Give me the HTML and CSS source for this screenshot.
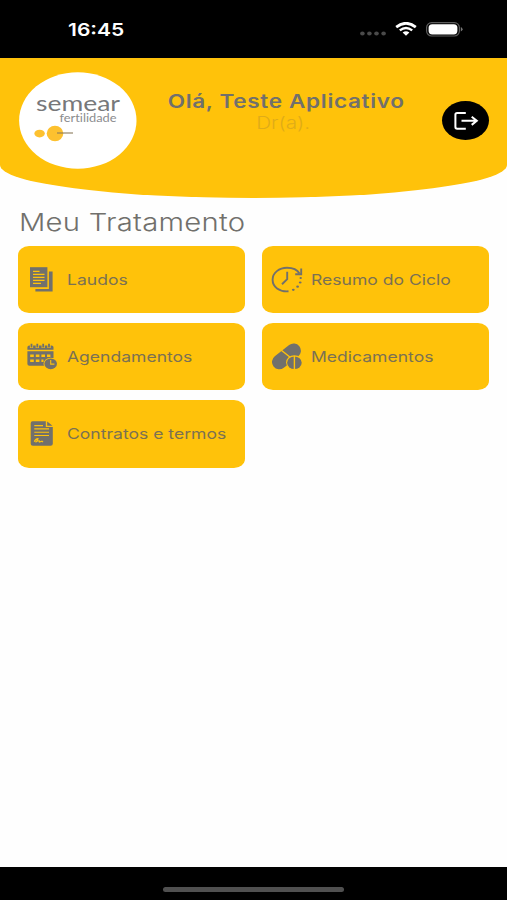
FILE: index.html
```html
<!DOCTYPE html>
<html lang="pt-BR">
<head>
    <meta charset="UTF-8">
    <meta name="viewport" content="width=device-width, initial-scale=1.0">
    <title>Semear Fertilidade</title>
    <link rel="stylesheet" href="styles.css">
</head>
<body>
    <div class="status-bar">
        <span class="time">16:45</span>
        <div class="status-icons">
            <svg class="signal" width="27" height="5" viewBox="0 0 27 5" fill="#4a4a4a">
                <ellipse cx="2.4" cy="2.5" rx="2.3" ry="1.9"/>
                <ellipse cx="9.4" cy="2.5" rx="2.3" ry="1.9"/>
                <ellipse cx="16.5" cy="2.5" rx="2.3" ry="1.9"/>
                <ellipse cx="23.6" cy="2.5" rx="2.3" ry="1.9"/>
            </svg>
            <svg class="wifi" width="22" height="14" viewBox="0 0 22 14" fill="none" stroke="#fff">
                <path d="M1.2 5.1Q11-2.6 20.8 5.1" stroke-width="2.7"/>
                <path d="M4.8 8.4Q11 3.4 17.2 8.4" stroke-width="2.4"/>
                <path d="M7.6 10.5Q11 8 14.4 10.5L11 13.8Z" fill="#fff" stroke="none"/>
            </svg>
            <svg class="battery" width="37" height="15" viewBox="0 0 37 15">
                <rect x=".6" y=".6" width="32.8" height="13.4" rx="5" fill="none" stroke="#5c5c5c" stroke-width="1.2"/>
                <rect x="2.6" y="2.2" width="28.8" height="10.2" rx="3.6" fill="#fff"/>
                <path d="M34.8 5Q36.6 5.8 36.6 7.3T34.8 9.6Z" fill="#777"/>
            </svg>
        </div>
    </div>

    <header class="header">
        <svg class="logo" width="118" height="97" viewBox="0 0 118 97">
            <ellipse cx="58.8" cy="48.5" rx="58.7" ry="48.3" fill="#fff"/>
            <text class="logo-name" x="17" y="39" textLength="84" lengthAdjust="spacingAndGlyphs">semear</text>
            <text class="logo-sub" x="40.5" y="49.5" textLength="57" lengthAdjust="spacingAndGlyphs">fertilidade</text>
            <ellipse cx="20.6" cy="61.6" rx="5.2" ry="3.9" fill="#fdc12f"/>
            <ellipse cx="36" cy="61.5" rx="8.3" ry="7.7" fill="#fdc12f"/>
            <path d="M38 61H54" stroke="#8b7b5c" stroke-width="1.1"/>
        </svg>
        <div class="greeting">
            <div class="user-name"><span>Olá, Teste Aplicativo</span></div>
            <div class="doctor"><span>Dr(a).</span></div>
        </div>
        <button class="logout-btn" aria-label="Sair">
            <svg width="26" height="20" viewBox="0 0 26 20" fill="none" stroke="#fff" stroke-width="2">
                <path d="M12.8 1.9H4.2Q2.4 1.9 2.4 3.5V16.1Q2.4 17.7 4.2 17.7H12.8"/>
                <path d="M8.5 9.8H24M18.7 5.7L23.8 9.8L18.7 13.9"/>
            </svg>
        </button>
    </header>

    <main class="content">
        <h1><span>Meu Tratamento</span></h1>
        <div class="menu">
            <a class="card">
                <svg width="32" height="28" viewBox="0 0 32 28">
                    <path d="M3 1.2H20.4V21.2H3Z" fill="#71706c"/>
                    <path d="M21.9 5.4H25.6V25.4H8.4V22.9H21.9Z" fill="#71706c"/>
                    <path d="M6 5.4H12.5M6 8.4H17.5M6 11.4H17.5M6 14.4H17.5M6 17.4H14" stroke="#ffc20a" stroke-width="1.2"/>
                </svg>
                <span>Laudos</span>
            </a>
            <a class="card">
                <svg width="32" height="28" viewBox="0 0 32 28" fill="none" stroke="#71706c" stroke-width="1.9">
                    <path d="M17.5 25.3C8.2 26 1.6 20.8 1.6 13.7C1.6 6.7 8.2 1.8 16 1.8C22 1.8 26.4 4 28.5 7.4"/>
                    <path d="M30.2 2.6V8.3H24.2"/>
                    <path d="M16.2 5.8V13.2L11 18.2"/>
                    <g fill="#71706c" stroke="none">
                        <ellipse cx="29.7" cy="12" rx="1.2" ry="1"/>
                        <ellipse cx="29.2" cy="16.5" rx="1.4" ry="1.1"/>
                        <ellipse cx="26.6" cy="20.7" rx="1.4" ry="1.1"/>
                        <ellipse cx="22.3" cy="23.8" rx="1.4" ry="1.1"/>
                    </g>
                </svg>
                <span>Resumo do Ciclo</span>
            </a>
            <a class="card">
                <svg width="32" height="28" viewBox="0 0 32 28">
                    <path d="M.4 6.8V4.3Q.4 2.6 2.4 2.6H24.5Q26.5 2.6 26.5 4.3V6.8ZM.4 8.2H26.5V15Q19.5 15.5 17.7 22.7H2.4Q.4 22.7 .4 21Z" fill="#71706c"/>
                    <path d="M4.5 1V5M10.3 1V5M16.2 1V5M22 1V5" stroke="#ffc20a" stroke-width="3.2"/>
                    <path d="M4.5 .8V4.6M10.3 .8V4.6M16.2 .8V4.6M22 .8V4.6" stroke="#71706c" stroke-width="1.8"/>
                    <path d="M3.2 11.5H6.8V14H3.2ZM8.8 11.5H12.4V14H8.8ZM14.4 11.5H18V14H14.4ZM20 11.5H23.4V14H20ZM3.2 16.5H6.8V19H3.2ZM8.8 16.5H12.4V19H8.8ZM14.4 16.5H16.5V19H14.4Z" fill="#ffc20a"/>
                    <ellipse cx="23.7" cy="20.8" rx="7.2" ry="6.1" fill="#ffc20a"/>
                    <ellipse cx="23.7" cy="20.8" rx="6.3" ry="5.4" fill="#71706c"/>
                    <path d="M23.7 17V21.1H27.4" fill="none" stroke="#ffc20a" stroke-width="1.1"/>
                </svg>
                <span>Agendamentos</span>
            </a>
            <a class="card">
                <svg width="32" height="28" viewBox="0 0 32 28">
                    <path d="M8.3 19L22.6 7.8" stroke="#71706c" stroke-width="14.6" stroke-linecap="round"/>
                    <path d="M10 7L22 16.5" stroke="#ffc20a" stroke-width="1.4"/>
                    <ellipse cx="23.4" cy="19.6" rx="8.3" ry="7.4" fill="#ffc20a"/>
                    <ellipse cx="23.4" cy="19.8" rx="7.3" ry="6.3" fill="#71706c"/>
                    <path d="M23.4 13V26.5" stroke="#ffc20a" stroke-width="1.4"/>
                </svg>
                <span>Medicamentos</span>
            </a>
            <a class="card">
                <svg width="32" height="28" viewBox="0 0 32 28">
                    <path d="M5.5 1.3H18.8V7H25.8V23.7Q25.8 25.7 23.6 25.7H5.9Q3.7 25.7 3.7 23.7V3.3Q3.7 1.3 5.5 1.3ZM20.2 1.6L25.5 5.8H20.2Z" fill="#71706c"/>
                    <path d="M7.3 5.6H16M7.3 8.9H22M7.3 12.2H22M7.3 15.5H22" stroke="#ffc20a" stroke-width="1.1"/>
                    <path d="M7.3 21.8Q8.5 18.5 11 18.6Q10.5 21 8.5 22.2Q11 20.5 12.2 20.8L12.4 22L15 21.2L16 22.2" fill="none" stroke="#ffc20a" stroke-width="1.2"/>
                </svg>
                <span>Contratos e termos</span>
            </a>
        </div>
    </main>

    <footer class="home-area">
        <div class="home-indicator"></div>
    </footer>
</body>
</html>
```

FILE: styles.css
```css
* {
    box-sizing: border-box;
}

body {
    font-family: Inter, "Liberation Sans", sans-serif;
    background-color: #fefefe;
    color: #71706c;
    margin: 0;
    height: 900px;
    display: flex;
    flex-direction: column;
    overflow: hidden;
}

.status-bar {
    background-color: #000;
    height: 57.5px;
    padding: 1px 44px 0 68px;
    display: flex;
    align-items: center;
    justify-content: space-between;
    flex-shrink: 0;
}

.time {
    color: #fff;
    font-size: 17.5px;
    font-weight: 600;
    transform: scaleX(1.2);
    transform-origin: left;
}

.status-icons {
    display: flex;
    align-items: center;
}

.signal {
    margin: 9px 8px 0 0;
}

.wifi {
    margin-right: 9px;
}

.header {
    background-color: #ffc20a;
    height: 140px;
    padding: 14.5px 18px 0 18.5px;
    display: flex;
    align-items: flex-start;
    flex-shrink: 0;
    border-radius: 0 0 50% 50% / 0 0 33px 33px;
}

.logo {
    flex-shrink: 0;
}

.logo-name {
    font-family: Lato, sans-serif;
    font-size: 21px;
    fill: #77787a;
}

.logo-sub {
    font-family: Lato, sans-serif;
    font-size: 10.5px;
    font-variant-ligatures: none;
    fill: #8b8c8e;
}

.greeting {
    flex: 1;
    padding: 18px 6px 0 0;
    text-align: center;
    white-space: nowrap;
}

.greeting span {
    display: inline-block;
    transform: scaleX(1.22);
}

.user-name {
    font-size: 18.5px;
    font-weight: 600;
    line-height: 22px;
    letter-spacing: 0.53px;
}

.doctor {
    color: #dfac18;
    font-size: 17px;
    font-weight: 300;
    line-height: 22px;
    margin-right: 6px;
}

.logout-btn {
    background-color: #000;
    width: 47px;
    height: 39px;
    margin-top: 29px;
    padding: 0;
    border: none;
    border-radius: 50%;
    display: flex;
    align-items: center;
    justify-content: center;
    flex-shrink: 0;
}

.content {
    flex: 1;
    padding: 10px 18px 0 18px;
}

h1 {
    font-size: 24px;
    font-weight: 300;
    line-height: 30px;
    margin: 0 0 8.5px 1px;
}

h1 span {
    display: inline-block;
    letter-spacing: 0.2px;
    transform: scaleX(1.22);
    transform-origin: left;
}

.menu {
    display: grid;
    grid-template-columns: 1fr 1fr;
    gap: 10px 17.5px;
}

.card {
    background-color: #ffc20a;
    height: 67.2px;
    padding-left: 9px;
    border-radius: 11px / 9.5px;
    display: flex;
    align-items: center;
    gap: 7.5px;
    font-size: 14.5px;
}

.card span {
    color: #7b7153;
    white-space: nowrap;
    transform: scaleX(1.21);
    transform-origin: left;
}

.home-area {
    background-color: #000;
    height: 33px;
    padding-top: 20px;
    flex-shrink: 0;
}

.home-indicator {
    background-color: #505050;
    width: 181px;
    height: 5px;
    margin: 0 auto;
    border-radius: 3px;
}
```
